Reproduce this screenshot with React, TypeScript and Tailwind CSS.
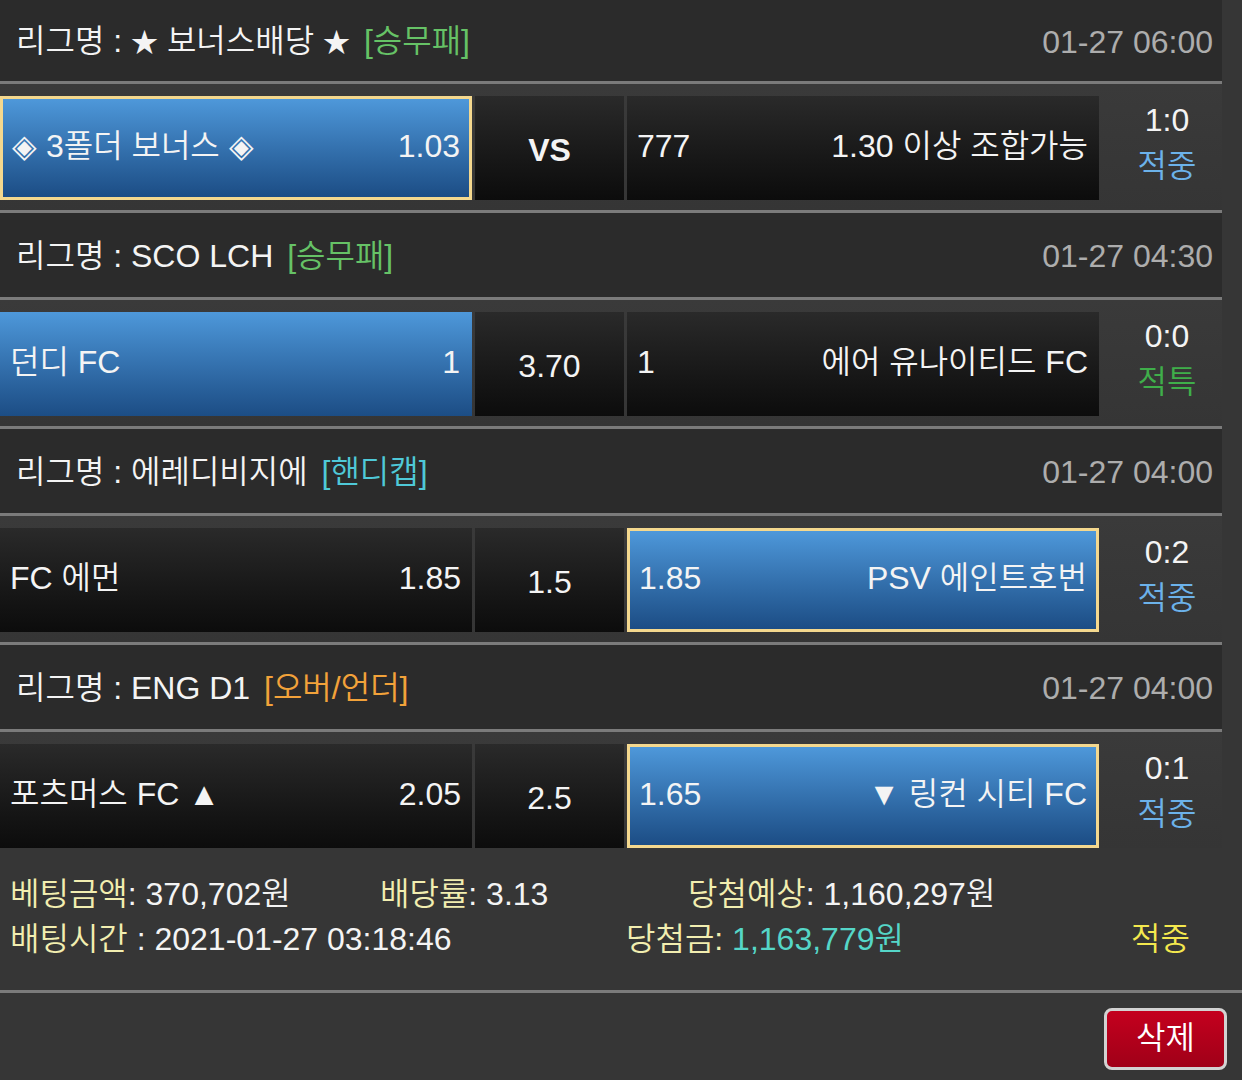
import React from 'react'

type Pick = 'home' | 'away'

type Game = {
  league: string
  tag: string
  tagColor: string
  time: string
  home: string
  homeOdds: string
  draw: string
  awayOdds: string
  away: string
  pick: Pick
  bordered: boolean
  score: string
  result: string
  resultColor: string
}

const games: Game[] = [
  {
    league: '보너스배당', tag: '[승무패]', tagColor: 'text-[#66c266]', time: '01-27 06:00',
    home: '◈ 3폴더 보너스 ◈', homeOdds: '1.03', draw: 'VS', awayOdds: '777', away: '1.30 이상 조합가능',
    pick: 'home', bordered: true, score: '1:0', result: '적중', resultColor: 'text-[#6cb2ea]',
  },
  {
    league: 'SCO LCH', tag: '[승무패]', tagColor: 'text-[#66c266]', time: '01-27 04:30',
    home: '던디 FC', homeOdds: '1', draw: '3.70', awayOdds: '1', away: '에어 유나이티드 FC',
    pick: 'home', bordered: false, score: '0:0', result: '적특', resultColor: 'text-[#3fae4a]',
  },
  {
    league: '에레디비지에', tag: '[핸디캡]', tagColor: 'text-[#4fc9d8]', time: '01-27 04:00',
    home: 'FC 에먼', homeOdds: '1.85', draw: '1.5', awayOdds: '1.85', away: 'PSV 에인트호번',
    pick: 'away', bordered: true, score: '0:2', result: '적중', resultColor: 'text-[#6cb2ea]',
  },
  {
    league: 'ENG D1', tag: '[오버/언더]', tagColor: 'text-[#f2a23a]', time: '01-27 04:00',
    home: '포츠머스 FC ▲', homeOdds: '2.05', draw: '2.5', awayOdds: '1.65', away: '▼ 링컨 시티 FC',
    pick: 'away', bordered: true, score: '0:1', result: '적중', resultColor: 'text-[#6cb2ea]',
  },
]

function Side({ left, right, active, bordered }: { left: string; right: string; active: boolean; bordered: boolean }) {
  const base = 'flex h-[104px] w-[472px] shrink-0 items-center justify-between pb-[4px]'
  const look = active
    ? bordered
      ? 'bg-gradient-to-b from-[#4e98da] to-[#1c4d85] border-[3px] border-[#f4d88e] pl-[9px] pr-[9px]'
      : 'bg-gradient-to-b from-[#4e98da] to-[#1c4d85] pl-[10px] pr-[12px]'
    : 'bg-gradient-to-b from-[#2a2a2a] to-[#0c0c0c] pl-[10px] pr-[11px]'
  return (
    <div className={`${base} ${look}`}>
      <span>{left}</span>
      <span>{right}</span>
    </div>
  )
}

function GameBlock({ g, first, last }: { g: Game; first: boolean; last: boolean }) {
  return (
    <div className="w-[1222px]">
      {/* league header */}
      <div
        className={`flex items-center justify-between border-b-[3px] border-[#7b7b7b] bg-[#2b2b2b] pl-[16px] pr-[9px] ${
          first ? 'h-[84px] pt-[4px]' : 'h-[87px] pt-[2px]'
        }`}
      >
        <div>
          리그명 :{' '}
          {first ? (
            <>
              <span className="text-[27px]">★</span> {g.league} <span className="text-[27px]">★</span>
            </>
          ) : (
            g.league
          )}{' '}
          <span className={`ml-[5px] ${g.tagColor}`}>{g.tag}</span>
        </div>
        <div className="text-[#adadad]">{g.time}</div>
      </div>

      {/* match row */}
      <div
        className={`flex gap-[3px] bg-gradient-to-b from-[#3a3a3a] to-[#353535] pt-[12px] ${
          last ? '' : 'pb-[10px] border-b-[3px] border-[#7b7b7b]'
        }`}
      >
        <Side left={g.home} right={g.homeOdds} active={g.pick === 'home'} bordered={g.bordered} />
        <div
          className={`flex h-[104px] w-[149px] shrink-0 items-center justify-center bg-gradient-to-b from-[#2a2a2a] to-[#0c0c0c] pt-[4px] ${
            g.draw === 'VS' ? 'font-bold' : ''
          }`}
        >
          {g.draw}
        </div>
        <Side left={g.awayOdds} right={g.away} active={g.pick === 'away'} bordered={g.bordered} />
        <div className="-ml-[3px] flex h-[104px] w-[136px] shrink-0 flex-col items-center pt-[1px] leading-[46px]">
          <span>{g.score}</span>
          <span className={g.resultColor}>{g.result}</span>
        </div>
      </div>
    </div>
  )
}

export default function App() {
  return (
    <div className="min-h-[1080px] w-[1242px] bg-[#363636] font-['Liberation_Sans','Noto_Sans_CJK_KR',sans-serif] text-[32px] font-[350] leading-[45px] text-[#f4f4f4]">
      {games.map((g, i) => (
        <GameBlock key={i} g={g} first={i === 0} last={i === games.length - 1} />
      ))}

      {/* summary */}
      <div className="border-b-[3px] border-[#7b7b7b] pb-[28px] pl-[10px] pt-[24px]">
        <div className="flex">
          <span className="w-[370px]">
            <span className="text-[#f2eeb0]">베팅금액</span>: 370,702원
          </span>
          <span className="w-[308px]">
            <span className="text-[#f2eeb0]">배당률</span>: 3.13
          </span>
          <span>
            <span className="text-[#f2eeb0]">당첨예상</span>: 1,160,297원
          </span>
        </div>
        <div className="flex">
          <span className="w-[616px]">
            <span className="text-[#f2eeb0]">배팅시간</span> : 2021-01-27 03:18:46
          </span>
          <span className="w-[505px]">
            <span className="text-[#f2eeb0]">당첨금:</span> <span className="text-[#55d6c8]">1,163,779원</span>
          </span>
          <span className="text-[#f4e84e]">적중</span>
        </div>
      </div>

      <div className="flex justify-end pr-[15px] pt-[15px]">
        <button className="flex h-[62px] w-[123px] items-center justify-center rounded-[8px] border-[3px] border-[#d2d2d2] bg-gradient-to-b from-[#c4001e] to-[#a00018] pb-[2px] text-[32px] text-white">
          삭제
        </button>
      </div>
    </div>
  )
}
